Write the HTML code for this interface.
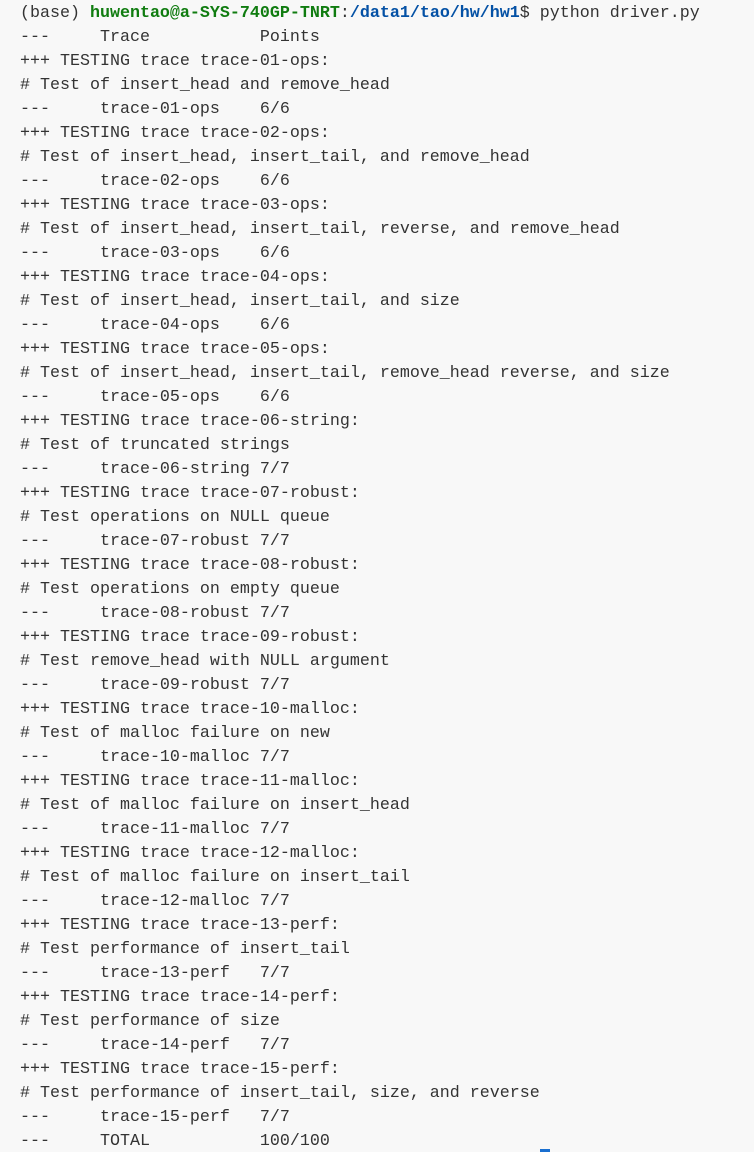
<!DOCTYPE html>
<html><head><meta charset="utf-8"><style>
html,body{margin:0;padding:0;background:#f8f8f8;width:754px;height:1152px;overflow:hidden}
pre{margin:0;padding:2px 0 0 20px;font-family:"Liberation Mono",monospace;font-size:16.67px;line-height:24px;color:#333;white-space:pre}
.g{color:#107c10;font-weight:bold}.b{color:#0451a5;font-weight:bold}
.cur{position:absolute;left:540px;top:1149px;width:10px;height:3px;background:#1a6fd0}
</style></head><body><pre>(base) <span class="g">huwentao@a-SYS-740GP-TNRT</span>:<span class="b">/data1/tao/hw/hw1</span>$ python driver.py
---     Trace           Points
+++ TESTING trace trace-01-ops:
# Test of insert_head and remove_head
---     trace-01-ops    6/6
+++ TESTING trace trace-02-ops:
# Test of insert_head, insert_tail, and remove_head
---     trace-02-ops    6/6
+++ TESTING trace trace-03-ops:
# Test of insert_head, insert_tail, reverse, and remove_head
---     trace-03-ops    6/6
+++ TESTING trace trace-04-ops:
# Test of insert_head, insert_tail, and size
---     trace-04-ops    6/6
+++ TESTING trace trace-05-ops:
# Test of insert_head, insert_tail, remove_head reverse, and size
---     trace-05-ops    6/6
+++ TESTING trace trace-06-string:
# Test of truncated strings
---     trace-06-string 7/7
+++ TESTING trace trace-07-robust:
# Test operations on NULL queue
---     trace-07-robust 7/7
+++ TESTING trace trace-08-robust:
# Test operations on empty queue
---     trace-08-robust 7/7
+++ TESTING trace trace-09-robust:
# Test remove_head with NULL argument
---     trace-09-robust 7/7
+++ TESTING trace trace-10-malloc:
# Test of malloc failure on new
---     trace-10-malloc 7/7
+++ TESTING trace trace-11-malloc:
# Test of malloc failure on insert_head
---     trace-11-malloc 7/7
+++ TESTING trace trace-12-malloc:
# Test of malloc failure on insert_tail
---     trace-12-malloc 7/7
+++ TESTING trace trace-13-perf:
# Test performance of insert_tail
---     trace-13-perf   7/7
+++ TESTING trace trace-14-perf:
# Test performance of size
---     trace-14-perf   7/7
+++ TESTING trace trace-15-perf:
# Test performance of insert_tail, size, and reverse
---     trace-15-perf   7/7
---     TOTAL           100/100</pre><div class="cur"></div></body></html>
